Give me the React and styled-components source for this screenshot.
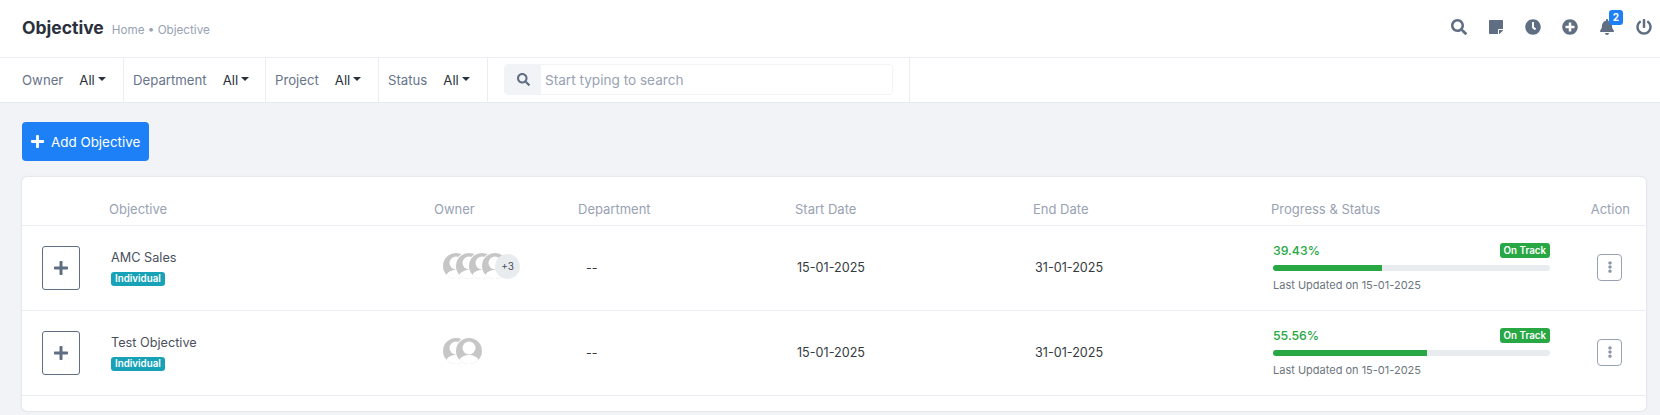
import styled, { createGlobalStyle } from 'styled-components';
import {
  FaSearch,
  FaStickyNote,
  FaClock,
  FaPlusCircle,
  FaBell,
  FaPowerOff,
  FaPlus,
  FaEllipsisV,
} from 'react-icons/fa';

const COLUMNS = '87px 325px 144px 217px 238px 238px 322px 1fr';

const GlobalStyle = createGlobalStyle`
  * { box-sizing: border-box; }
  html, body { margin: 0; padding: 0; }
  body {
    width: 1660px;
    height: 415px;
    overflow: hidden;
    background: #f1f3f7;
    font-family: Inter, "Liberation Sans", sans-serif;
    color: #343a40;
  }
`;

const TopBar = styled.header`
  height: 58px;
  background: #fff;
  border-bottom: 1px solid #ebedf2;
  display: flex;
  align-items: center;
  justify-content: space-between;
  padding: 0 8px 3px 22px;
`;

const TitleGroup = styled.div`
  display: flex;
  align-items: baseline;
  gap: 8px;
`;

const PageTitle = styled.h1`
  margin: 0;
  font-size: 17.5px;
  font-weight: 700;
  color: #2a303c;
`;

const Crumbs = styled.span`
  font-size: 11.7px;
  color: #98a2b3;
`;

const IconRow = styled.div`
  display: flex;
  align-items: center;
  gap: 20px;
  color: #5f6e83;
`;

const IconSlot = styled.span`
  position: relative;
  display: flex;
  width: 17px;
  height: 17px;
  align-items: center;
  justify-content: center;
  font-size: 16px;
`;

const NotifyBadge = styled.span`
  position: absolute;
  top: -9px;
  right: -8px;
  width: 14px;
  height: 15px;
  border-radius: 3px;
  background: #1e80f6;
  color: #fff;
  font-size: 10px;
  font-weight: 700;
  display: flex;
  align-items: center;
  justify-content: center;
`;

const FilterBar = styled.div`
  height: 45px;
  background: #fff;
  border-bottom: 1px solid #e6e9ef;
  display: flex;
`;

const FilterCell = styled.div`
  display: flex;
  align-items: center;
  width: ${(p) => p.$width}px;
  padding-left: ${(p) => p.$left || 9}px;
  border-right: 1px solid #ebedf2;
  font-size: 13.2px;
`;

const FilterLabel = styled.span`
  color: #67748a;
  margin-right: 16px;
`;

const FilterValue = styled.span`
  color: #2a303c;
  display: flex;
  align-items: center;
  gap: 3px;
  &::after {
    content: '';
    border-top: 4.5px solid #2a303c;
    border-left: 4.5px solid transparent;
    border-right: 4.5px solid transparent;
    margin-top: -3px;
  }
`;

const SearchCell = styled.div`
  width: 422px;
  padding-left: 16px;
  border-right: 1px solid #ebedf2;
  display: flex;
  align-items: center;
`;

const SearchBox = styled.div`
  width: 389px;
  height: 31px;
  margin-top: -1px;
  display: flex;
  border: 1px solid #f1f3f7;
  border-radius: 4px;
  overflow: hidden;
`;

const SearchAddon = styled.span`
  width: 36px;
  background: #f1f3f7;
  color: #5f6e83;
  font-size: 13px;
  display: flex;
  align-items: center;
  justify-content: center;
`;

const SearchInput = styled.input`
  flex: 1;
  border: none;
  outline: none;
  padding: 0 4px;
  font-family: inherit;
  font-size: 13.6px;
  &::placeholder {
    color: #98a2b3;
    opacity: 1;
  }
`;

const Content = styled.main`
  padding: 19px 14px 0 22px;
`;

const AddButton = styled.button`
  width: 127px;
  height: 39px;
  border: none;
  border-radius: 4px;
  background: #1e80f6;
  color: #fff;
  font-family: inherit;
  font-size: 13.4px;
  display: flex;
  align-items: center;
  gap: 6px;
  padding: 0 0 0 8px;
  margin-bottom: 16px;
`;

const Card = styled.section`
  height: 234px;
  background: #fff;
  border-radius: 5px;
  box-shadow: 0 0 2px rgba(90, 105, 130, 0.28);
`;

const HeadRow = styled.div`
  display: grid;
  grid-template-columns: ${COLUMNS};
  height: 49px;
  align-items: center;
  padding-top: 16px;
  border-bottom: 1px solid #ebedf2;
  font-size: 13px;
  color: #98a2b3;
`;

const ActionHead = styled.span`
  text-align: right;
  padding-right: 16px;
  margin-left: -20px;
`;

const Row = styled.div`
  display: grid;
  grid-template-columns: ${COLUMNS};
  height: 85px;
  align-items: center;
  border-bottom: 1px solid #ebedf2;
  font-size: 12.6px;
  color: #343a40;
`;

const ExpandButton = styled.span`
  width: 38px;
  height: 44px;
  margin-left: 20px;
  border: 1px solid #5f6e83;
  border-radius: 3px;
  color: #5f6e83;
  font-size: 16px;
  display: flex;
  align-items: center;
  justify-content: center;
`;

const ObjectiveCell = styled.div`
  padding-left: 2px;
  display: flex;
  flex-direction: column;
  align-items: flex-start;
  gap: 7px;
  margin-top: -1px;
`;

const ObjectiveName = styled.span`
  font-size: 12.7px;
  font-weight: 400;
  color: #4a4f5c;
`;

const TypeBadge = styled.span`
  background: #17a2b8;
  color: #fff;
  font-size: 9.75px;
  font-weight: 600;
  line-height: 14px;
  padding: 0 4px;
  border-radius: 3px;
`;

const Avatars = styled.div`
  display: flex;
  align-items: center;
  padding-left: 9px;
  margin-top: -4px;
`;

const AvatarFrame = styled.span`
  width: 26px;
  height: 26px;
  margin-right: -13px;
  border-radius: 50%;
  overflow: hidden;
  background: #c6c6c6;
  box-shadow: 0 0 0 1px #fff;
  display: block;
  flex: none;
`;

const MoreCount = styled.span`
  position: relative;
  width: 25px;
  height: 25px;
  border-radius: 50%;
  background: #e9ecef;
  color: #4a4f5c;
  font-size: 10px;
  display: flex;
  align-items: center;
  justify-content: center;
  flex: none;
`;

const DeptCell = styled.span`
  padding-left: 8px;
  margin-top: -2px;
`;

const DateCell = styled.span`
  padding-left: 2px;
  margin-top: -2px;
`;

const ProgressCell = styled.div`
  width: 277px;
  margin-left: 2px;
  display: flex;
  flex-direction: column;
  margin-top: -2px;
`;

const ProgressTop = styled.div`
  display: flex;
  justify-content: space-between;
  align-items: flex-start;
  height: 22px;
`;

const Percent = styled.span`
  color: #28a745;
  font-size: 12.3px;
  font-weight: 500;
  line-height: 16px;
`;

const StatusBadge = styled.span`
  background: #28a745;
  color: #fff;
  font-size: 9.75px;
  font-weight: 600;
  line-height: 15px;
  padding: 0 4px;
  border-radius: 3px;
`;

const Track = styled.div`
  height: 6px;
  border-radius: 3px;
  background: #e9ecef;
  overflow: hidden;
`;

const Fill = styled.div`
  height: 100%;
  background: #28a745;
`;

const Updated = styled.span`
  margin-top: 7px;
  font-size: 11px;
  color: #6c757d;
`;

const MenuButton = styled.span`
  width: 25px;
  height: 27px;
  margin-left: 4px;
  margin-top: -2px;
  border: 1px solid #98a2b3;
  border-radius: 4px;
  color: #8a95a8;
  font-size: 12px;
  display: flex;
  align-items: center;
  justify-content: center;
`;

const Avatar = () => (
  <AvatarFrame>
    <svg viewBox='0 0 26 26' width='26' height='26'>
      <circle cx='13' cy='10' r='6.5' fill='#fff' />
      <path d='M2 28c0-8 5-11 11-11s11 3 11 11z' fill='#fff' />
    </svg>
  </AvatarFrame>
);

const rows = [
  { name: 'AMC Sales', avatars: 4, more: 3, percent: 39.43 },
  { name: 'Test Objective', avatars: 2, percent: 55.56 },
];

const filters = [
  { label: 'Owner', width: 124, left: 22 },
  { label: 'Department', width: 142 },
  { label: 'Project', width: 113 },
  { label: 'Status', width: 109 },
];

const App = () => {
  return (
    <>
      <GlobalStyle />
      <TopBar>
        <TitleGroup>
          <PageTitle>Objective</PageTitle>
          <Crumbs>Home • Objective</Crumbs>
        </TitleGroup>
        <IconRow>
          <IconSlot><FaSearch /></IconSlot>
          <IconSlot><FaStickyNote /></IconSlot>
          <IconSlot><FaClock /></IconSlot>
          <IconSlot><FaPlusCircle /></IconSlot>
          <IconSlot>
            <FaBell />
            <NotifyBadge>2</NotifyBadge>
          </IconSlot>
          <IconSlot><FaPowerOff /></IconSlot>
        </IconRow>
      </TopBar>
      <FilterBar>
        {filters.map(({ label, width, left }) => (
          <FilterCell key={label} $width={width} $left={left}>
            <FilterLabel>{label}</FilterLabel>
            <FilterValue>All</FilterValue>
          </FilterCell>
        ))}
        <SearchCell>
          <SearchBox>
            <SearchAddon><FaSearch /></SearchAddon>
            <SearchInput placeholder='Start typing to search' />
          </SearchBox>
        </SearchCell>
      </FilterBar>
      <Content>
        <AddButton>
          <FaPlus size={15} />
          Add Objective
        </AddButton>
        <Card>
          <HeadRow>
            <span />
            <span>Objective</span>
            <span>Owner</span>
            <span>Department</span>
            <span>Start Date</span>
            <span>End Date</span>
            <span>Progress &amp; Status</span>
            <ActionHead>Action</ActionHead>
          </HeadRow>
          {rows.map(({ name, avatars, more, percent }) => (
            <Row key={name}>
              <ExpandButton><FaPlus /></ExpandButton>
              <ObjectiveCell>
                <ObjectiveName>{name}</ObjectiveName>
                <TypeBadge>Individual</TypeBadge>
              </ObjectiveCell>
              <Avatars>
                {Array.from({ length: avatars }, (_, i) => (
                  <Avatar key={i} />
                ))}
                {more && <MoreCount>+{more}</MoreCount>}
              </Avatars>
              <DeptCell>--</DeptCell>
              <DateCell>15-01-2025</DateCell>
              <DateCell>31-01-2025</DateCell>
              <ProgressCell>
                <ProgressTop>
                  <Percent>{percent}%</Percent>
                  <StatusBadge>On Track</StatusBadge>
                </ProgressTop>
                <Track>
                  <Fill style={{ width: `${percent}%` }} />
                </Track>
                <Updated>Last Updated on 15-01-2025</Updated>
              </ProgressCell>
              <MenuButton><FaEllipsisV /></MenuButton>
            </Row>
          ))}
        </Card>
      </Content>
    </>
  );
};

export default App;
